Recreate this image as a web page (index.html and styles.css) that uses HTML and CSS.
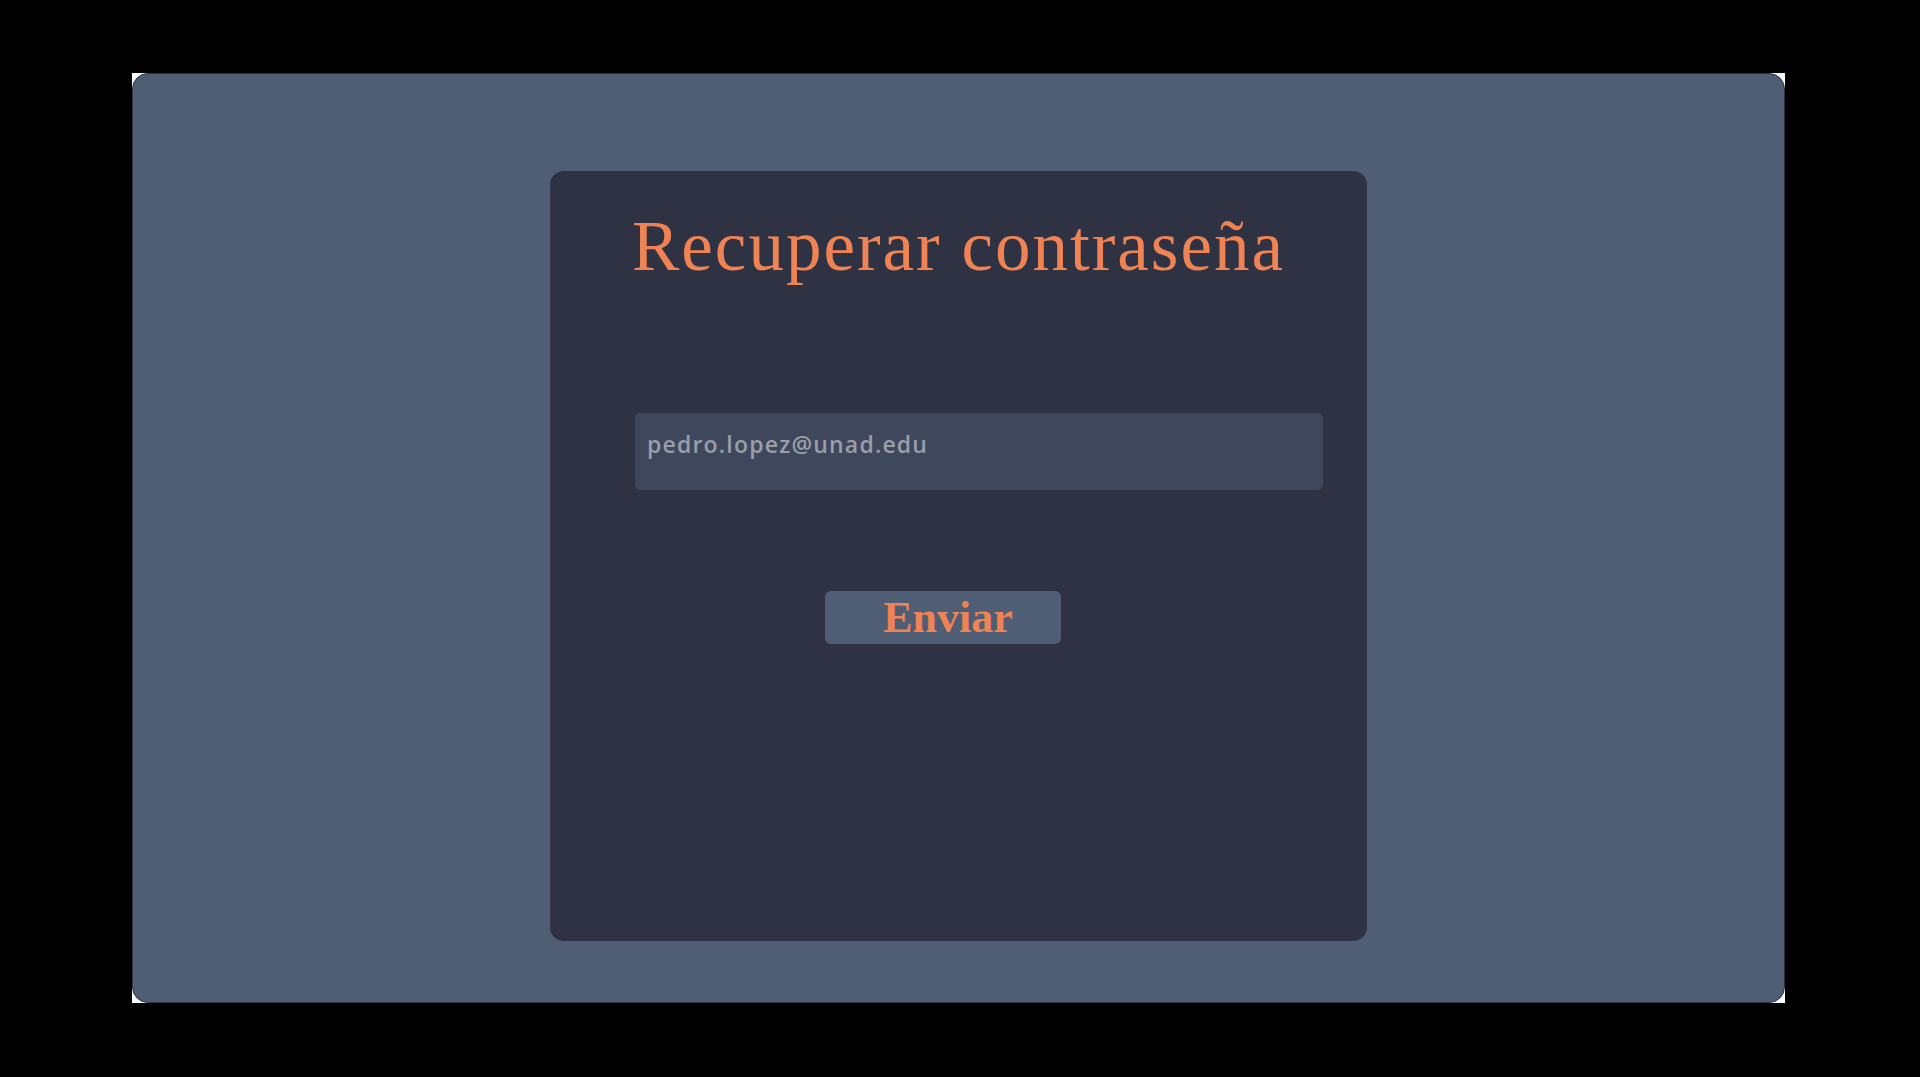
FILE: index.html
```html
<!DOCTYPE html>
<html lang="es">
<head>
<meta charset="utf-8">
<title>Recuperar contraseña</title>
<link rel="stylesheet" href="styles.css">
</head>
<body>
<div class="frame">
  <div class="screen">
    <div class="card">
      <h1 class="title">Recuperar contraseña</h1>
      <div class="field">pedro.lopez@unad.edu</div>
      <button class="send">Enviar</button>
    </div>
  </div>
</div>
</body>
</html>
```
FILE: styles.css
```css
html, body {
  margin: 0;
  padding: 0;
  background: #000;
}
body {
  width: 1920px;
  height: 1077px;
  overflow: hidden;
  padding: 73px 0 0 132px;
  box-sizing: border-box;
}
.frame {
  width: 1653px;
  height: 930px;
  background: #fff;
}
.screen {
  width: 100%;
  height: 100%;
  box-sizing: border-box;
  background: #4f5d75;
  border: 1px solid #2d3142;
  border-radius: 16px;
  padding: 97px 0 0 417px;
}
.card {
  width: 817px;
  height: 770px;
  box-sizing: border-box;
  background: #2e3243;
  border-radius: 14px;
  padding-top: 40px;
  display: flex;
  flex-direction: column;
}
.title {
  margin: 0;
  font-family: "Liberation Serif", serif;
  font-weight: 400;
  font-size: 71px;
  line-height: 1;
  letter-spacing: 2px;
  color: #ef8354;
  text-align: center;
}
.field {
  margin: 131px 0 0 85px;
  width: 688px;
  height: 77px;
  box-sizing: border-box;
  background: #3e475b;
  border-radius: 5px;
  padding: 16px 12px 0;
  font-family: "Open Sans", sans-serif;
  font-weight: 600;
  font-size: 23px;
  line-height: 30px;
  letter-spacing: 1.2px;
  color: #9a9ea8;
}
.send {
  margin: 101px 0 0 275px;
  width: 236px;
  height: 53px;
  border: 0;
  border-radius: 6px;
  background: #4f5d75;
  padding: 0 0 0 10px;
  font-family: "Liberation Serif", serif;
  font-weight: 700;
  font-size: 44px;
  line-height: 53px;
  color: #ef8354;
  text-align: center;
}
```
